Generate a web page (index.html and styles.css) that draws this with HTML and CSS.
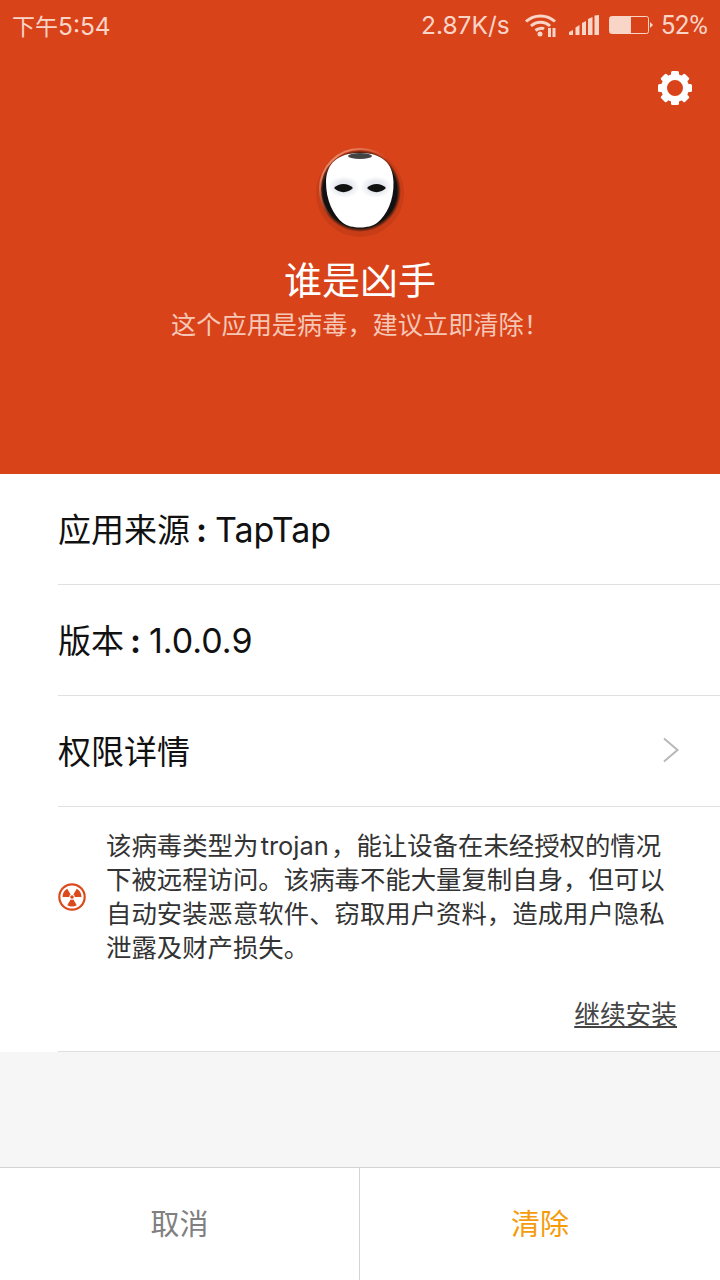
FILE: index.html
```html
<!DOCTYPE html>
<html lang="zh-CN">
<head>
    <meta charset="UTF-8">
    <meta name="viewport" content="width=device-width, initial-scale=1.0">
    <title>病毒清除</title>
    <link rel="stylesheet" href="styles.css">
</head>
<body>
    <div id="screen">
        <header id="hero">
            <div id="statusbar">
                <span class="time"><span class="time-cjk">下午</span>5:54</span>
                <span class="status-right">
                    <span class="speed">2.87K/s</span>
                    <svg class="wifi" width="33" height="24" viewBox="0 0 33 24">
                        <g fill="none" stroke="#f9d5c8" stroke-width="3">
                            <path d="M2 8.5C10 1 23 1 31 8.5"/>
                            <path d="M7 13C12.500 8 20.500 8 26 13"/>
                            <path d="M11.500 17.500C14.500 15 18.500 15 20 16"/>
                        </g>
                        <circle cx="16" cy="21" r="2.500" fill="#f9d5c8"/>
                        <rect x="24" y="15" width="3" height="9" fill="#f9d5c8"/>
                        <rect x="28.500" y="15" width="3" height="9" fill="#f9d5c8"/>
                    </svg>
                    <svg class="signal" width="30" height="20" viewBox="0 0 30 20">
                        <path d="M0 20V17L4 15V20ZM6.500 20V12.500L10.500 10V20ZM13 20V8L17 6V20ZM19 20V4L23.500 2V20ZM25.500 20V0.500L30 0V20Z" fill="#f9d5c8"/>
                    </svg>
                    <svg class="battery" width="44" height="18" viewBox="0 0 44 18">
                        <rect x="0.500" y="0.500" width="39" height="17" rx="2" fill="none" stroke="#f9d5c8"/>
                        <rect x="1" y="1" width="21" height="16" fill="#f9d5c8"/>
                        <path d="M41 6L44 9L41 12Z" fill="#f9d5c8"/>
                    </svg>
                    <span class="percent">52%</span>
                </span>
            </div>
            <div class="gear-row">
                <svg width="36" height="36" viewBox="0 0 36 36">
                    <g fill="#fff">
                        <rect x="14" y="1" width="8" height="9" rx="1.500"/>
                        <rect x="14" y="1" width="8" height="9" rx="1.500" transform="rotate(45 18 18)"/>
                        <rect x="14" y="1" width="8" height="9" rx="1.500" transform="rotate(90 18 18)"/>
                        <rect x="14" y="1" width="8" height="9" rx="1.500" transform="rotate(135 18 18)"/>
                        <rect x="14" y="1" width="8" height="9" rx="1.500" transform="rotate(180 18 18)"/>
                        <rect x="14" y="1" width="8" height="9" rx="1.500" transform="rotate(225 18 18)"/>
                        <rect x="14" y="1" width="8" height="9" rx="1.500" transform="rotate(270 18 18)"/>
                        <rect x="14" y="1" width="8" height="9" rx="1.500" transform="rotate(315 18 18)"/>
                    </g>
                    <circle cx="18" cy="18" r="11" fill="none" stroke="#fff" stroke-width="6"/>
                </svg>
            </div>
            <svg class="mask" width="90" height="92" viewBox="0 0 90 92">
                <defs>
                    <radialGradient id="rim" cx="0.500" cy="0.500" r="0.500">
                        <stop offset="0.900" stop-color="#111"/>
                        <stop offset="1" stop-color="#111" stop-opacity="0"/>
                    </radialGradient>
                    <radialGradient id="patch" cx="0.500" cy="0.500" r="0.500">
                        <stop offset="0.500" stop-color="#e6e9ef"/>
                        <stop offset="1" stop-color="#fff"/>
                    </radialGradient>
                    <linearGradient id="glow" x1="0" y1="0" x2="1" y2="1">
                        <stop offset="0" stop-color="#f4a68c"/>
                        <stop offset="0.500" stop-color="#f4a68c" stop-opacity="0"/>
                    </linearGradient>
                </defs>
                <circle cx="45" cy="47" r="44" fill="#9a2c0c" opacity="0.250"/>
                <circle cx="45" cy="45" r="41" fill="url(#rim)"/>
                <circle cx="45" cy="43" r="40" fill="none" stroke="url(#glow)" stroke-width="2"/>
                <path d="M45 7C67 7 78 17 78.500 36C79 54 72 69 62 77C54 83 36 83 28 77C18 69 11 54 11 36C11.500 17 23 7 45 7Z" fill="#fff"/>
                <ellipse cx="45" cy="10" rx="12" ry="3" fill="#444"/>
                <ellipse cx="29" cy="41" rx="16" ry="11" fill="url(#patch)"/>
                <ellipse cx="61" cy="41" rx="16" ry="11" fill="url(#patch)"/>
                <path d="M19 42C24 36.500 33 36.500 38 42C33 47.500 24 47.500 19 42Z" fill="#111"/>
                <path d="M71 42C66 36.500 57 36.500 52 42C57 47.500 66 47.500 71 42Z" fill="#111"/>
            </svg>
            <h1>谁是凶手</h1>
            <p class="verdict">这个应用是病毒，建议立即清除！</p>
        </header>

        <main id="details">
            <div class="row"><span>应用来源<span class="colon">:</span><span class="value">TapTap</span></span></div>
            <div class="row"><span>版本<span class="colon">:</span><span class="value">1.0.0.9</span></span></div>
            <div class="row row-link">
                权限详情
                <svg width="18" height="26" viewBox="0 0 18 26">
                    <path d="M2 1.500L15.500 13L2 24.500" fill="none" stroke="#b8b8b8" stroke-width="2"/>
                </svg>
            </div>
            <div class="warning">
                <div class="warning-body">
                    <svg class="radiation" width="28" height="28" viewBox="0 0 28 28">
                        <circle cx="14" cy="14" r="12.700" fill="none" stroke="#dc4a1c" stroke-width="2.200"/>
                        <circle cx="14" cy="14" r="1.800" fill="#dc4a1c"/>
                        <path d="M15.400 11.580L18.750 5.770A9.500 9.500 0 0 1 23.500 14H16.800A2.800 2.800 0 0 0 15.400 11.580Z" fill="#dc4a1c"/>
                        <path d="M12.600 11.580L9.250 5.770A9.500 9.500 0 0 0 4.500 14H11.200A2.800 2.800 0 0 1 12.600 11.580Z" fill="#dc4a1c"/>
                        <path d="M15.400 16.420L18.750 22.230A9.500 9.500 0 0 1 9.250 22.230L12.600 16.420A2.800 2.800 0 0 0 15.400 16.420Z" fill="#dc4a1c"/>
                    </svg>
                    <p>该病毒类型为&hairsp;trojan&hairsp;，能让设备在未经授权的情况下被远程访问。该病毒不能大量复制自身，但可以自动安装恶意软件、窃取用户资料，造成用户隐私泄露及财产损失。</p>
                </div>
                <a class="continue" href="#">继续安装</a>
            </div>
        </main>

        <div id="spacer"></div>

        <footer id="actions">
            <button class="cancel">取消</button>
            <button class="clear">清除</button>
        </footer>
    </div>
</body>
</html>
```
FILE: styles.css
```css
* { box-sizing: border-box; }

body {
    margin: 0;
    font-family: Inter, "Noto Sans CJK SC", sans-serif;
    background-color: #f6f6f6;
}

#screen {
    display: flex;
    flex-direction: column;
    width: 720px;
    height: 1280px;
    overflow: hidden;
}

#hero {
    display: flex;
    flex-direction: column;
    align-items: center;
    height: 474px;
    background-color: #d9431a;
    color: #fff;
}

#statusbar {
    display: flex;
    justify-content: space-between;
    align-items: center;
    width: 100%;
    height: 50px;
    padding: 0 12px;
    font-size: 24.500px;
    color: #f9d5c8;
}

.time-cjk { font-size: 23px; }

.status-right {
    display: flex;
    align-items: center;
}

.speed { margin-right: 14px; }
.wifi { margin-right: 12px; }
.signal { margin-right: 10px; }
.battery { margin-right: 8px; }

.percent {
    font-family: Roboto, sans-serif;
    font-size: 25.500px;
}

.gear-row {
    display: flex;
    justify-content: flex-end;
    width: 100%;
    height: 50px;
    padding: 20px 27px 0 0;
}

.mask {
    margin-top: 46px;
}

h1 {
    margin: 18px 0 0;
    font-size: 38px;
    font-weight: 400;
    line-height: 48px;
}

.verdict {
    margin: 1px 0 0;
    font-size: 25.200px;
    line-height: 40px;
    color: #f7c7b6;
}

#details {
    background-color: #fff;
}

.row {
    display: flex;
    align-items: center;
    justify-content: space-between;
    height: 111px;
    margin-left: 58px;
    padding: 0 40px 2px 0;
    border-bottom: 1px solid #e0e0e0;
    font-size: 33px;
    color: #111;
}

.colon {
    display: inline-block;
    width: 25px;
    padding-left: 6px;
    font-weight: 700;
}

.value { font-size: 34px; }

.warning {
    height: 245px;
    margin-left: 58px;
    padding: 22px 43px 0 0;
    border-bottom: 1px solid #e0e0e0;
}

.warning-body {
    display: flex;
    align-items: center;
    padding-right: 5px;
}

.radiation {
    flex-shrink: 0;
    margin-right: 21px;
}

.warning-body p {
    margin: 0 0 0 -1px;
    font-size: 25.400px;
    line-height: 34px;
    color: #333;
}

.continue {
    display: block;
    margin-top: 33px;
    font-size: 25.700px;
    line-height: 34px;
    text-align: right;
    color: #444;
}

#spacer {
    flex: 1;
}

#actions {
    display: flex;
    height: 113px;
    border-top: 1px solid #d4d4d4;
    background-color: #fff;
}

#actions button {
    width: 50%;
    padding: 0 0 5px;
    border: none;
    background: none;
    font-family: inherit;
    font-size: 29px;
}

#actions .cancel {
    border-right: 1px solid #d4d4d4;
    color: #808080;
}

#actions .clear {
    color: #f59b0c;
}
```
